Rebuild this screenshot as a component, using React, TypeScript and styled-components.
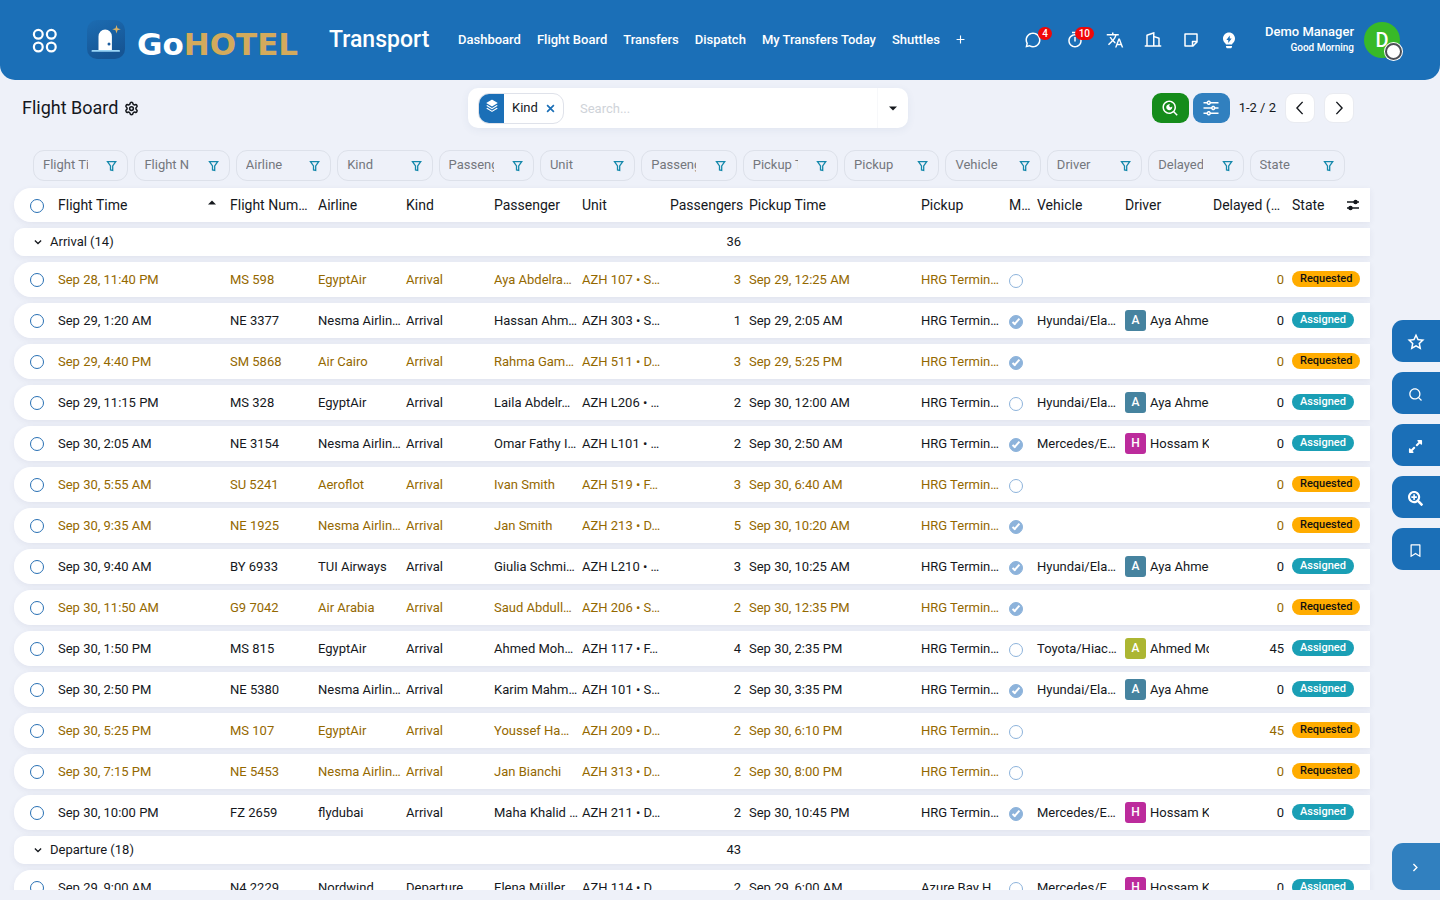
import React from "react";
import styled, { createGlobalStyle } from "styled-components";
import { Settings } from "lucide-react";
import {
  RiBookmarkLine,
  RiBuilding2Line,
  RiChat3Line,
  RiEqualizerLine,
  RiLightbulbFlashFill,
  RiSearchEyeLine,
  RiSearchLine,
  RiStackFill,
  RiStarLine,
  RiStickyNoteLine,
  RiTimerLine,
} from "react-icons/ri";
import { MdTranslate } from "react-icons/md";
import { FaExpandAlt, FaSearchPlus } from "react-icons/fa";

const GlobalStyle = createGlobalStyle`
  *, *::before, *::after { box-sizing: border-box; }
  body {
    margin: 0;
    background: #eef1f9;
    color: #15181d;
    font: 400 13px/20px Roboto, "Liberation Sans", sans-serif;
  }
  button, input { font: inherit; color: inherit; }
  button { border: 0; padding: 0; background: none; cursor: pointer; }
  a { color: inherit; text-decoration: none; }
`;

const Page = styled.div`
  display: flex;
  flex-direction: column;
  height: 100vh;
  padding-bottom: 10px;
`;

const Header = styled.header`
  display: flex;
  align-items: center;
  flex: none;
  height: 80px;
  padding: 0 40px 0 32px;
  background: #1b6fb7;
  color: #fff;
  border-radius: 0 0 15px 15px;
`;

const AppsButton = styled.button`
  display: flex;
  margin: 2px 28px 0 0;
`;

const Brand = styled.a`
  display: flex;
  align-items: center;
  width: 222px;
  white-space: nowrap;
`;

const BrandText = styled.span`
  margin: 8px 0 0 9px;
  font: 700 31px/32px "DejaVu Sans", sans-serif;
`;

const Gold = styled.span`
  color: #d3aa5c;
`;

const AppName = styled.a`
  margin-left: 21px;
  width: 100px;
  font-size: 23px;
  line-height: 30px;
  font-weight: 500;
`;

const Nav = styled.nav`
  display: flex;
  align-items: center;
  flex: 1;
  gap: 16px;
  margin-left: 29px;
  font-weight: 500;
  white-space: nowrap;
`;

const Systray = styled.div`
  display: flex;
  align-items: center;
  gap: 20px;
  margin-right: 27px;
`;

const TrayButton = styled.button<{ $counted?: boolean }>`
  position: relative;
  display: flex;
  justify-content: center;
  width: ${(p) => (p.$counted ? 22 : 18)}px;
  font-size: 18px;
`;

const TrayBadge = styled.span`
  position: absolute;
  right: -8px;
  top: -4px;
  min-width: 14px;
  padding: 0 4px;
  border-radius: 7px;
  background: #f00808;
  font-size: 10px;
  line-height: 13px;
  font-weight: 500;
`;

const UserText = styled.div`
  display: flex;
  flex-direction: column;
  align-items: flex-end;
  margin-right: 10px;
  font-weight: 500;
  line-height: 16px;
`;

const Greeting = styled.span`
  font-size: 10px;
`;

const Avatar = styled.button`
  position: relative;
  width: 36px;
  height: 36px;
  border-radius: 50%;
  background: #38b928;
  color: #fff;
  font-size: 20px;
  line-height: 36px;
  font-weight: 500;
`;

const Status = styled.span`
  position: absolute;
  right: -2px;
  bottom: -2px;
  width: 17px;
  height: 17px;
  border: 2px solid #4c4f55;
  border-radius: 50%;
  background: #fff;
  box-shadow: 0 0 0 1px #fff;
`;

const ControlPanel = styled.div`
  display: grid;
  grid-template-columns: 1fr 440px 1fr;
  align-items: center;
  flex: none;
  padding: 8px 86px 0 22px;
`;

const Title = styled.h1`
  display: flex;
  align-items: center;
  gap: 6px;
  margin: 0;
  font-size: 18px;
  line-height: 24px;
  font-weight: 400;
`;

const IconButton = styled.button`
  display: flex;
  font-size: 16px;
`;

const SearchBox = styled.div`
  display: flex;
  align-items: center;
  height: 40px;
  padding-left: 10px;
  border-radius: 10px;
  background: #fff;
  box-shadow: 0 2px 8px rgba(60, 80, 130, 0.07);
`;

const Facet = styled.div`
  display: flex;
  align-items: center;
  width: 86px;
  height: 31px;
  border: 1px solid #dfe2ea;
  border-radius: 11px;
  overflow: hidden;
`;

const FacetIcon = styled.span`
  display: flex;
  justify-content: center;
  align-self: stretch;
  width: 25px;
  padding-top: 5px;
  margin-right: 8px;
  background: #1b6fb7;
  color: #fff;
  font-size: 14px;
`;

const FacetClose = styled.button`
  display: flex;
  margin-left: 8px;
  color: #1b6fb7;
`;

const SearchInput = styled.input`
  flex: 1;
  min-width: 0;
  height: 32px;
  margin-left: 12px;
  padding: 0 4px;
  border: 0;
  outline: 0;
  background: none;
  &::placeholder { color: #cfd3d9; }
`;

const SearchToggle = styled.button`
  display: flex;
  align-items: center;
  justify-content: center;
  width: 31px;
  height: 40px;
  border-left: 1px solid #f7f8fa;
`;

const Tools = styled.div`
  display: flex;
  align-items: center;
  justify-content: flex-end;
  gap: 9px;
`;

const ToolPair = styled.div`
  display: flex;
  gap: 4px;
`;

const ToolButton = styled.button<{ $bg: string }>`
  display: flex;
  align-items: center;
  justify-content: center;
  width: 37px;
  height: 30px;
  border-radius: 9px;
  background: ${(p) => p.$bg};
  color: #fff;
  font-size: 18px;
`;

const PagerButton = styled.button`
  display: flex;
  align-items: center;
  justify-content: center;
  width: 30px;
  height: 30px;
  border: 1px solid #e9ebf1;
  border-radius: 9px;
  background: #fff;
`;

const Filters = styled.form`
  display: grid;
  grid-template-columns: repeat(13, minmax(0, 1fr));
  gap: 6px;
  flex: none;
  margin: 22px 95px 0 33px;
`;

const FilterBox = styled.div`
  display: flex;
  align-items: center;
  justify-content: space-between;
  height: 31px;
  padding: 0 10px 0 9px;
  border: 1px solid #dde1ea;
  border-radius: 11px;
`;

const FilterInput = styled.input`
  width: 45px;
  min-width: 0;
  height: 24px;
  padding: 0 0 2px;
  border: 0;
  outline: 0;
  background: none;
  &::placeholder { color: #74777d; }
`;

const FilterButton = styled.button`
  display: flex;
  color: #1488ab;
`;

const ListArea = styled.main`
  flex: 1;
  min-height: 0;
  overflow: hidden;
  padding: 1px 70px 0 14px;
`;

const Table = styled.table`
  width: 100%;
  table-layout: fixed;
  border-collapse: separate;
  border-spacing: 0 6px;
`;

const rowHeight = { head: 34, group: 28, item: 35 };

const Row = styled.tr<{ $kind?: "head" | "group" | "item"; $open?: boolean }>`
  --round: ${(p) => (p.$kind === "group" ? 10 : 17)}px;
  height: ${(p) => rowHeight[p.$kind ?? "item"]}px;
  color: ${(p) => (p.$open ? "#946800" : "inherit")};
  border-radius: var(--round) 0 0 var(--round);
  box-shadow: 0 2px 6px rgba(60, 60, 100, 0.07);
  & > * { background: #fff; }
  & > :first-child { border-radius: var(--round) 0 0 var(--round); }
`;

const Cell = styled.td<{ $right?: boolean; $flush?: boolean }>`
  padding: 0 ${(p) => (p.$flush ? 0 : 4)}px 0 4px;
  overflow: hidden;
  white-space: nowrap;
  text-align: ${(p) => (p.$right ? "right" : "left")};
`;

const HeadCell = styled(Cell)`
  font-size: 14px;
  font-weight: 400;
  padding-right: 0;
`;

const PaxHead = styled(HeadCell)`
  padding-right: 2px;
`;

const Spread = styled.span`
  display: flex;
  align-items: center;
  justify-content: space-between;
  padding-right: 10px;
`;

const SelectCell = styled.td`
  padding: 0 0 0 16px;
`;

const SelectHead = styled.th`
  padding: 2px 0 0 16px;
`;

const Round = styled.input`
  appearance: none;
  display: block;
  position: relative;
  width: 14px;
  height: 14px;
  margin: 0;
  border: 1px solid #2870b4;
  border-radius: 50%;
`;

const Met = styled(Round)`
  margin-top: 2px;
  border-color: #8db3db;
  &:checked { background: #8db3db; }
  &:checked::after {
    content: "";
    position: absolute;
    left: 4px;
    top: 1px;
    width: 4px;
    height: 8px;
    border: solid #fff;
    border-width: 0 2px 2px 0;
    transform: rotate(42deg);
  }
`;

const GroupCell = styled.th`
  padding: 0 0 0 19px;
  font-weight: 400;
  text-align: left;
`;

const GroupToggle = styled.button`
  display: flex;
  align-items: center;
  gap: 7px;
`;

const Driver = styled.span`
  display: flex;
  align-items: center;
  gap: 4px;
`;

const DriverAvatar = styled.span<{ $bg: string }>`
  flex: none;
  width: 21px;
  border-radius: 3px;
  background: ${(p) => p.$bg};
  color: #fff;
  font-size: 12px;
  line-height: 21px;
  font-weight: 500;
  text-align: center;
`;

const State = styled.span<{ $open?: boolean }>`
  display: inline-block;
  padding: 0 8px;
  border-radius: 8px;
  background: ${(p) => (p.$open ? "#ffac00" : "#1a9fb5")};
  color: ${(p) => (p.$open ? "#111" : "#fff")};
  font-size: 11px;
  line-height: 16px;
  font-weight: 500;
  vertical-align: 2px;
`;

const Dock = styled.aside`
  position: fixed;
  right: 0;
  top: 320px;
  display: flex;
  flex-direction: column;
  gap: 10px;
`;

const DockButton = styled.button`
  display: flex;
  align-items: center;
  justify-content: center;
  width: 48px;
  height: 42px;
  padding: 2px 1px 0 0;
  border-radius: 11px 0 0 11px;
  background: #1b6fb7;
  color: #fff;
  font-size: 15px;
`;

const NextButton = styled(DockButton)`
  position: fixed;
  right: 0;
  bottom: 10px;
  height: 47px;
  background: #3180bf;
`;

type ArrowProps = { d: string; size: number; width?: number };

const Arrow = ({ d, size, width = 2 }: ArrowProps) => (
  <svg width={size} height={size} viewBox="0 0 16 16" fill="none" stroke="currentColor" strokeWidth={width}>
    <path d={d} />
  </svg>
);

const AppsIcon = () => (
  <svg width="26" height="26" viewBox="0 0 26 26" fill="none" stroke="#fff" strokeWidth="2.2">
    <circle cx="6.3" cy="6.3" r="4.4" />
    <circle cx="19.3" cy="6.3" r="4.4" />
    <circle cx="6.3" cy="19" r="4.4" />
    <circle cx="19.3" cy="19" r="4.4" />
  </svg>
);

const DoorLogo = () => (
  <svg width="42" height="42" viewBox="0 0 42 42">
    <defs>
      <linearGradient id="door-tile" x1="0" y1="0" x2="0.400" y2="1">
        <stop offset="0" stopColor="#1c6cb2" />
        <stop offset="1" stopColor="#165594" />
      </linearGradient>
    </defs>
    <rect x="1" y="1" width="38" height="39" rx="10" fill="url(#door-tile)" />
    <path d="M12.500 31V17.500a6.700 7 0 0 1 13.400 0V31z" fill="#fff" />
    <rect x="5.500" y="31" width="28.500" height="1.800" rx="0.900" fill="#9bd6f7" />
    <circle cx="23" cy="25" r="1.500" fill="#1b5c9f" />
    <path d="M30.500 6l1 3.300 3.300 1-3.300 1-1 3.300-1-3.300-3.300-1 3.300-1z" fill="#d8b166" />
  </svg>
);

const FunnelIcon = () => (
  <svg width="11" height="12" viewBox="0 0 11 12" fill="none" stroke="currentColor" strokeWidth="1.300">
    <path d="M1.500 1.700h8.200L6.700 5.900v4.600L4.500 10V5.900z" />
  </svg>
);

const OptionsIcon = () => (
  <svg width="14" height="12" viewBox="0 0 14 12" stroke="currentColor" strokeWidth="1.400" fill="currentColor">
    <path d="M1 3h12M1 9h12" />
    <circle cx="9.500" cy="3" r="1.500" />
    <circle cx="4.500" cy="9" r="1.500" />
  </svg>
);

const Triangle = ({ up }: { up?: boolean }) => (
  <svg width="8" height={up ? 10 : 5} viewBox={up ? "0 0 8 10" : "0 0 8 5"} fill="currentColor">
    <path d={up ? "M0 4.500 4 .5l4 4z" : "M0 .5h8l-4 4z"} />
  </svg>
);

type Flight = {
  time: string;
  number: string;
  airline: string;
  guest: string;
  unit: string;
  pax: number;
  pickup: string;
  met?: boolean;
  vehicle?: string;
  driver?: string;
  delay?: number;
  kind?: string;
  from?: string;
};

const drivers: Record<string, { name: string; color: string }> = {
  aya: { name: "Aya Ahmed", color: "#46839f" },
  hossam: { name: "Hossam Kamal", color: "#bc2b9c" },
  ahmed: { name: "Ahmed Mostafa", color: "#acb632" },
};

const arrivals: Flight[] = [
  { time: "Sep 28, 11:40 PM", number: "MS 598", airline: "EgyptAir", guest: "Aya Abdelra…", unit: "AZH 107 • S…", pax: 3, pickup: "Sep 29, 12:25 AM" },
  { time: "Sep 29, 1:20 AM", number: "NE 3377", airline: "Nesma Airlin…", guest: "Hassan Ahm…", unit: "AZH 303 • S…", pax: 1, pickup: "Sep 29, 2:05 AM", met: true, vehicle: "Hyundai/Ela…", driver: "aya" },
  { time: "Sep 29, 4:40 PM", number: "SM 5868", airline: "Air Cairo", guest: "Rahma Gam…", unit: "AZH 511 • D…", pax: 3, pickup: "Sep 29, 5:25 PM", met: true },
  { time: "Sep 29, 11:15 PM", number: "MS 328", airline: "EgyptAir", guest: "Laila Abdelr…", unit: "AZH L206 • …", pax: 2, pickup: "Sep 30, 12:00 AM", vehicle: "Hyundai/Ela…", driver: "aya" },
  { time: "Sep 30, 2:05 AM", number: "NE 3154", airline: "Nesma Airlin…", guest: "Omar Fathy I…", unit: "AZH L101 • …", pax: 2, pickup: "Sep 30, 2:50 AM", met: true, vehicle: "Mercedes/E…", driver: "hossam" },
  { time: "Sep 30, 5:55 AM", number: "SU 5241", airline: "Aeroflot", guest: "Ivan Smith", unit: "AZH 519 • F…", pax: 3, pickup: "Sep 30, 6:40 AM" },
  { time: "Sep 30, 9:35 AM", number: "NE 1925", airline: "Nesma Airlin…", guest: "Jan Smith", unit: "AZH 213 • D…", pax: 5, pickup: "Sep 30, 10:20 AM", met: true },
  { time: "Sep 30, 9:40 AM", number: "BY 6933", airline: "TUI Airways", guest: "Giulia Schmi…", unit: "AZH L210 • …", pax: 3, pickup: "Sep 30, 10:25 AM", met: true, vehicle: "Hyundai/Ela…", driver: "aya" },
  { time: "Sep 30, 11:50 AM", number: "G9 7042", airline: "Air Arabia", guest: "Saud Abdull…", unit: "AZH 206 • S…", pax: 2, pickup: "Sep 30, 12:35 PM", met: true },
  { time: "Sep 30, 1:50 PM", number: "MS 815", airline: "EgyptAir", guest: "Ahmed Moh…", unit: "AZH 117 • F…", pax: 4, pickup: "Sep 30, 2:35 PM", vehicle: "Toyota/Hiac…", driver: "ahmed", delay: 45 },
  { time: "Sep 30, 2:50 PM", number: "NE 5380", airline: "Nesma Airlin…", guest: "Karim Mahm…", unit: "AZH 101 • S…", pax: 2, pickup: "Sep 30, 3:35 PM", met: true, vehicle: "Hyundai/Ela…", driver: "aya" },
  { time: "Sep 30, 5:25 PM", number: "MS 107", airline: "EgyptAir", guest: "Youssef Ha…", unit: "AZH 209 • D…", pax: 2, pickup: "Sep 30, 6:10 PM", delay: 45 },
  { time: "Sep 30, 7:15 PM", number: "NE 5453", airline: "Nesma Airlin…", guest: "Jan Bianchi", unit: "AZH 313 • D…", pax: 2, pickup: "Sep 30, 8:00 PM" },
  { time: "Sep 30, 10:00 PM", number: "FZ 2659", airline: "flydubai", guest: "Maha Khalid …", unit: "AZH 211 • D…", pax: 2, pickup: "Sep 30, 10:45 PM", met: true, vehicle: "Mercedes/E…", driver: "hossam" },
];

const departures: Flight[] = [
  { time: "Sep 29, 9:00 AM", number: "N4 2229", airline: "Nordwind", guest: "Elena Müller", unit: "AZH 114 • D…", pax: 2, pickup: "Sep 29, 6:00 AM", vehicle: "Mercedes/E…", driver: "hossam", kind: "Departure", from: "Azure Bay H…" },
];

const filters = ["Flight Time", "Flight Number", "Airline", "Kind", "Passenger", "Unit", "Passengers", "Pickup Time", "Pickup", "Vehicle", "Driver", "Delayed", "State"];
const menu = ["Dashboard", "Flight Board", "Transfers", "Dispatch", "My Transfers Today", "Shuttles"];
const columns = [40, 172, 88, 88, 88, 88, 88, 79, 172, 88, 28, 88, 88, 79, 82];

const FlightRow = ({ flight: f }: { flight: Flight }) => {
  const driver = f.driver ? drivers[f.driver] : undefined;
  return (
    <Row $open={!driver}>
      <SelectCell><Round type="checkbox" aria-label={`Select ${f.number}`} /></SelectCell>
      <Cell>{f.time}</Cell>
      <Cell>{f.number}</Cell>
      <Cell $flush>{f.airline}</Cell>
      <Cell>{f.kind ?? "Arrival"}</Cell>
      <Cell $flush>{f.guest}</Cell>
      <Cell>{f.unit}</Cell>
      <Cell $right>{f.pax}</Cell>
      <Cell>{f.pickup}</Cell>
      <Cell>{f.from ?? "HRG Termin…"}</Cell>
      <Cell><Met type="checkbox" defaultChecked={f.met} aria-label={`Met ${f.number}`} /></Cell>
      <Cell>{f.vehicle}</Cell>
      <Cell $flush>
        {driver && (
          <Driver>
            <DriverAvatar $bg={driver.color}>{driver.name[0]}</DriverAvatar>
            {driver.name}
          </Driver>
        )}
      </Cell>
      <Cell $right>{f.delay ?? 0}</Cell>
      <Cell><State $open={!driver}>{driver ? "Assigned" : "Requested"}</State></Cell>
    </Row>
  );
};

const Group = ({ label, total, flights }: { label: string; total: number; flights: Flight[] }) => (
  <tbody>
    <Row $kind="group">
      <GroupCell colSpan={7} scope="rowgroup">
        <GroupToggle type="button"><Arrow d="M3 5.500l5 5 5-5" size={10} />{label}</GroupToggle>
      </GroupCell>
      <Cell $right>{total}</Cell>
      <td colSpan={7} />
    </Row>
    {flights.map((f) => <FlightRow key={f.time} flight={f} />)}
  </tbody>
);

export default function App() {
  return (
    <Page>
      <GlobalStyle />
      <Header>
        <AppsButton aria-label="Apps"><AppsIcon /></AppsButton>
        <Brand href="#">
          <DoorLogo />
          <BrandText>Go<Gold>HOTEL</Gold></BrandText>
        </Brand>
        <AppName href="#">Transport</AppName>
        <Nav>
          {menu.map((m) => <a key={m} href="#">{m}</a>)}
          <button type="button" aria-label="More"><Arrow d="M8 1v14M1 8h14" size={9} /></button>
        </Nav>
        <Systray>
          <TrayButton $counted aria-label="Messages"><RiChat3Line /><TrayBadge>4</TrayBadge></TrayButton>
          <TrayButton $counted aria-label="Activities"><RiTimerLine /><TrayBadge>10</TrayBadge></TrayButton>
          <TrayButton aria-label="Language"><MdTranslate /></TrayButton>
          <TrayButton aria-label="Company"><RiBuilding2Line /></TrayButton>
          <TrayButton aria-label="Notes"><RiStickyNoteLine /></TrayButton>
          <TrayButton aria-label="Tips"><RiLightbulbFlashFill /></TrayButton>
        </Systray>
        <UserText>
          <span>Demo Manager</span>
          <Greeting>Good Morning</Greeting>
        </UserText>
        <Avatar aria-label="Account">D<Status /></Avatar>
      </Header>

      <ControlPanel>
        <Title>
          Flight Board
          <IconButton aria-label="Settings"><Settings size={15} strokeWidth={2.4} /></IconButton>
        </Title>
        <SearchBox role="search">
          <Facet>
            <FacetIcon><RiStackFill /></FacetIcon>
            Kind
            <FacetClose aria-label="Remove"><Arrow d="M2 2l12 12M14 2L2 14" size={9} width={3} /></FacetClose>
          </Facet>
          <SearchInput type="text" aria-label="Search" placeholder="Search..." />
          <SearchToggle aria-label="Search options"><Triangle /></SearchToggle>
        </SearchBox>
        <Tools>
          <ToolPair>
            <ToolButton $bg="#158c1b" aria-label="Preview"><RiSearchEyeLine /></ToolButton>
            <ToolButton $bg="#3180bf" aria-label="Filters"><RiEqualizerLine /></ToolButton>
          </ToolPair>
          <span>1-2 / 2</span>
          <PagerButton aria-label="Previous"><Arrow d="M11 1L4.500 8l6.500 7" size={14} width={1.6} /></PagerButton>
          <PagerButton aria-label="Next"><Arrow d="M5 1l6.500 7L5 15" size={14} width={1.6} /></PagerButton>
        </Tools>
      </ControlPanel>

      <Filters>
        {filters.map((f) => (
          <FilterBox key={f}>
            <FilterInput type="text" aria-label={f} placeholder={f} />
            <FilterButton type="button" aria-label={`Filter ${f}`}><FunnelIcon /></FilterButton>
          </FilterBox>
        ))}
      </Filters>

      <ListArea>
        <Table>
          <colgroup>{columns.map((w, i) => <col key={i} style={{ width: w }} />)}</colgroup>
          <thead>
            <Row $kind="head">
              <SelectHead><Round type="checkbox" aria-label="Select all" /></SelectHead>
              <HeadCell as="th"><Spread>Flight Time <Triangle up /></Spread></HeadCell>
              <HeadCell as="th">Flight Num…</HeadCell>
              <HeadCell as="th">Airline</HeadCell>
              <HeadCell as="th">Kind</HeadCell>
              <HeadCell as="th">Passenger</HeadCell>
              <HeadCell as="th">Unit</HeadCell>
              <PaxHead as="th" $right>Passengers</PaxHead>
              <HeadCell as="th">Pickup Time</HeadCell>
              <HeadCell as="th">Pickup</HeadCell>
              <HeadCell as="th">M…</HeadCell>
              <HeadCell as="th">Vehicle</HeadCell>
              <HeadCell as="th">Driver</HeadCell>
              <HeadCell as="th">Delayed (…</HeadCell>
              <HeadCell as="th">
                <Spread>State <IconButton aria-label="Columns"><OptionsIcon /></IconButton></Spread>
              </HeadCell>
            </Row>
          </thead>
          <Group label="Arrival (14)" total={36} flights={arrivals} />
          <Group label="Departure (18)" total={43} flights={departures} />
        </Table>
      </ListArea>

      <Dock>
        <DockButton aria-label="Favourite"><RiStarLine size={18} /></DockButton>
        <DockButton aria-label="Search"><RiSearchLine /></DockButton>
        <DockButton aria-label="Expand"><FaExpandAlt /></DockButton>
        <DockButton aria-label="Zoom"><FaSearchPlus /></DockButton>
        <DockButton aria-label="Bookmark"><RiBookmarkLine /></DockButton>
      </Dock>
      <NextButton aria-label="Next panel"><Arrow d="M5 3l5 5-5 5" size={11} /></NextButton>
    </Page>
  );
}
